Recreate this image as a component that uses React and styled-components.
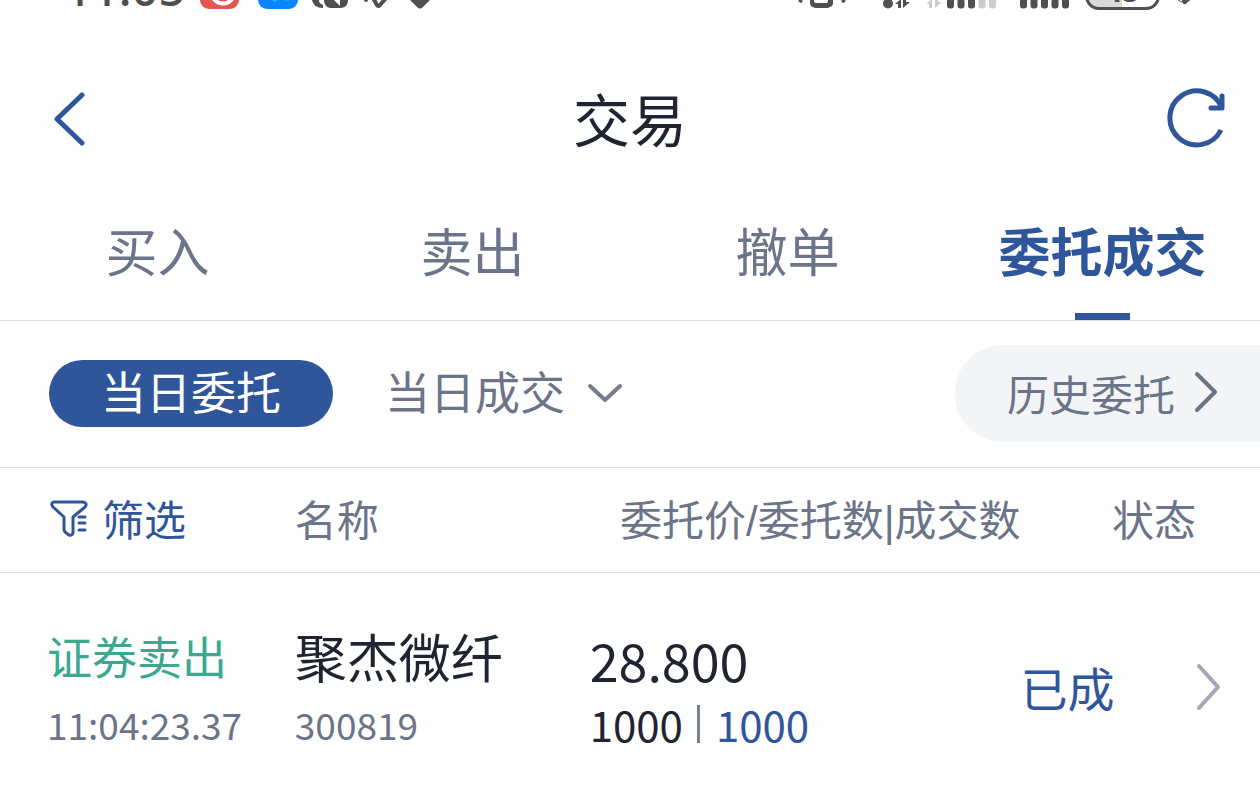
import styled, { createGlobalStyle } from "styled-components";

const tabs = ["买入", "卖出", "撤单", "委托成交"];

const orders = [
  {
    side: "证券卖出",
    time: "11:04:23.37",
    name: "聚杰微纤",
    code: "300819",
    price: "28.800",
    amount: "1000",
    dealt: "1000",
    status: "已成",
  },
];

function SignalBars({ total, active, x = 0 }) {
  return Array.from({ length: total }, (_, i) => (
    <rect
      key={i}
      x={x + i * 10.5}
      y="-20"
      width="7"
      height="28.5"
      rx="3"
      fill={i < active ? "#4f4f4f" : "#cccccc"}
    />
  ));
}

function PhoneStatus() {
  return (
    <StatusBar>
      <StatusGroup>
        <Clock>11:05</Clock>
        <svg width="42" height="12">
          <rect x="0" y="-30" width="39" height="39" rx="9" fill="#e2574f" />
          <circle cx="23" cy="-8" r="11.5" fill="none" stroke="#fff" strokeWidth="4" />
          <circle cx="23" cy="-5" r="5" fill="#fff" />
        </svg>
        <svg width="42" height="12">
          <rect x="2" y="-30" width="40" height="39" rx="9" fill="#0b84ff" />
          <path d="M15 0l4 2 3-2h6l5 1v-4H15z" fill="#19b5f5" />
        </svg>
        <svg width="37" height="12">
          <path d="M0 0c1 5 5 8 11 8V5C8 4 7 2 7 0z" fill="#4f4f4f" />
          <path d="M12 0h24c0 5-3 8-8 8H18c-4-1-6-4-6-8z" fill="#4f4f4f" />
          <path d="M20 -2h8v8z" fill="#fff" />
        </svg>
        <svg width="28" height="12">
          <circle cx="3" cy="0" r="2" fill="#4f4f4f" />
          <path d="M10 -2l4 7q1 2 3 0l6-7" fill="none" stroke="#4f4f4f" strokeWidth="4" />
        </svg>
        <svg width="28" height="12">
          <path d="M4 -1h22l-8 8q-3 3-6 0z" fill="#4f4f4f" />
        </svg>
      </StatusGroup>
      <StatusGroup>
        <svg width="70" height="12">
          <path d="M1 0l3 2M47 0l-3 2" stroke="#4f4f4f" strokeWidth="3" />
          <path d="M12 -2h4v3q0 2 2 2h10q2 0 2-2v-3h5v5q0 3-3 4l-2 1H17l-2-1q-3-1-3-4z" fill="#4f4f4f" />
        </svg>
        <svg width="30" height="12">
          <circle cx="6" cy="3.5" r="5" fill="#4f4f4f" />
          <path d="M13 4l6-5v9h-3V4zM21 -1v9l7-6h-4v-3z" fill="#4f4f4f" />
        </svg>
        <svg width="78" height="12">
          <path d="M0 4l6-5v9H3V4zM9 -1v9l7-6h-4v-3z" fill="#cccccc" />
          <SignalBars total={5} active={3} x={21} />
        </svg>
        <svg width="53" height="12">
          <SignalBars total={5} active={5} x={2} />
        </svg>
        <Battery>45</Battery>
        <svg width="21" height="12">
          <path d="M4 0l4 2M8 -2h10l-7 6-2-1z" fill="#4f4f4f" stroke="#4f4f4f" />
        </svg>
      </StatusGroup>
    </StatusBar>
  );
}

function Chevron({ width, height, points, color, stroke = 4 }) {
  return (
    <svg width={width} height={height} aria-hidden="true">
      <polyline
        points={points}
        fill="none"
        stroke={color}
        strokeWidth={stroke}
        strokeLinecap="round"
        strokeLinejoin="round"
      />
    </svg>
  );
}

function FilterIcon() {
  return (
    <svg width="38" height="38" fill="none" stroke="#2f559b" strokeWidth="3" strokeLinecap="round" strokeLinejoin="round" aria-hidden="true">
      <path d="M4 3H33Q38 4 35 8L23 18V34Q22 37 19 36L15 33Q14 32 14 30V18L3 8Q0 4 4 3Z" />
      <path d="M29 18H35M29 24H35M29 31H35" />
    </svg>
  );
}

export default function App() {
  return (
    <Page>
      <GlobalStyle />
      <PhoneStatus />
      <TitleBar>
        <BackButton aria-label="返回">
          <Chevron width={32} height={56} points="28,4 3,28 28,52" color="#2f559b" stroke={5} />
        </BackButton>
        <h1>交易</h1>
        <RefreshButton aria-label="刷新">
          <svg width="62" height="62" fill="none" stroke="#2f559b" strokeWidth="5" strokeLinejoin="round">
            <path d="M57 42A27 27 0 1 1 58 20" />
            <path d="M58 8V20H47" strokeLinecap="round" />
          </svg>
        </RefreshButton>
      </TitleBar>
      <Tabs>
        {tabs.map((tab) => (
          <Tab key={tab} $active={tab === "委托成交"}>
            {tab}
          </Tab>
        ))}
      </Tabs>
      <Filters>
        <Pill>当日委托</Pill>
        <DealButton>
          当日成交
          <Chevron width={36} height={26} points="3,8 18,22 33,8" color="#777b8c" />
        </DealButton>
        <HistoryButton>
          历史委托
          <Chevron width={26} height={44} points="4,4 22,22 4,40" color="#6b7488" />
        </HistoryButton>
      </Filters>
      <OrderTable>
        <colgroup>
          <NameCol />
          <NameCol />
          <PriceCol />
          <col />
        </colgroup>
        <thead>
          <tr>
            <HeadCell>
              <FilterButton>
                <FilterIcon />
                筛选
              </FilterButton>
            </HeadCell>
            <HeadCell>名称</HeadCell>
            <HeadCell $right>委托价/委托数|成交数</HeadCell>
            <HeadCell $right>状态</HeadCell>
          </tr>
        </thead>
        <tbody>
          {orders.map((order) => (
            <tr key={order.time}>
              <Cell>
                <Side>{order.side}</Side>
                <Minor>{order.time}</Minor>
              </Cell>
              <Cell>
                <Major>{order.name}</Major>
                <Minor>{order.code}</Minor>
              </Cell>
              <Cell>
                <Price>{order.price}</Price>
                <Amounts>
                  {order.amount}
                  <Divider />
                  <Dealt>{order.dealt}</Dealt>
                </Amounts>
              </Cell>
              <Cell>
                <Status>
                  {order.status}
                  <IconButton aria-label="详情">
                    <Chevron width={26} height={50} points="3,4 22,25 3,46" color="#a3a7b5" />
                  </IconButton>
                </Status>
              </Cell>
            </tr>
          ))}
        </tbody>
      </OrderTable>
    </Page>
  );
}

const GlobalStyle = createGlobalStyle`
  * {
    box-sizing: border-box;
  }

  body {
    margin: 0;
    background: #fefefe;
  }

  button {
    border: 0;
    padding: 0;
    background: none;
    font: inherit;
    color: inherit;
    cursor: pointer;
  }

  svg {
    display: block;
    flex-shrink: 0;
  }
`;

const Page = styled.div`
  font-family: "Noto Sans CJK SC", sans-serif;
  color: #1f2430;
`;

const StatusBar = styled.div`
  display: flex;
  justify-content: space-between;
  height: 12px;
  padding: 0 65px;
  overflow: hidden;
`;

const StatusGroup = styled.div`
  display: flex;
  align-items: flex-end;
  gap: 14px;
`;

const Clock = styled.div`
  width: 121px;
  font-family: "Noto Sans", sans-serif;
  font-size: 47px;
  line-height: 48px;
  font-weight: 500;
  color: #4f4f4f;
`;

const Battery = styled.div`
  width: 75px;
  height: 38px;
  margin-bottom: 2px;
  border: 3px solid #4f4f4f;
  border-radius: 14px;
  background: linear-gradient(to right, #d8d8d8 50%, #fff 50%);
  font-family: "Noto Sans", sans-serif;
  font-size: 30px;
  font-weight: 700;
  line-height: 32px;
  text-align: center;
  color: #4f4f4f;
`;

const TitleBar = styled.header`
  display: grid;
  grid-template-columns: 1fr auto 1fr;
  align-items: center;
  height: 174px;
  padding: 40px 34px 0;

  h1 {
    margin: 0;
    padding-bottom: 4px;
    font-size: 57px;
    font-weight: 400;
  }
`;

const IconButton = styled.button`
  display: flex;
`;

const BackButton = styled(IconButton)`
  padding-left: 20px;
`;

const RefreshButton = styled(IconButton)`
  justify-self: end;
`;

const Tabs = styled.nav`
  display: grid;
  grid-template-columns: repeat(4, 1fr);
  height: 135px;
  border-bottom: 1px solid #dcdfe2;
`;

const Tab = styled.button`
  position: relative;
  padding-bottom: 8px;
  font-size: 52px;
  font-weight: ${(props) => (props.$active ? 700 : 400)};
  color: ${(props) => (props.$active ? "#2f559b" : "#6b7488")};

  &::after {
    content: "";
    display: ${(props) => (props.$active ? "block" : "none")};
    position: absolute;
    bottom: 0;
    left: calc(50% - 28px);
    width: 55px;
    height: 7px;
    background: #2f559b;
  }
`;

const Filters = styled.div`
  display: flex;
  align-items: center;
  height: 147px;
  padding: 0 0 2px 49px;
  border-bottom: 1px solid #dcdfe2;
  font-size: 45px;
  color: #6b7488;
`;

const Pill = styled.button`
  width: 284px;
  height: 67px;
  border-radius: 34px;
  background: #2f559b;
  color: #fff;
  line-height: 60px;
  padding-bottom: 4px;
`;

const DealButton = styled.button`
  display: flex;
  align-items: center;
  gap: 22px;
  margin-left: 52px;
  line-height: 60px;
  padding-bottom: 4px;
`;

const HistoryButton = styled.button`
  display: flex;
  align-items: center;
  gap: 18px;
  height: 97px;
  margin-left: auto;
  padding: 0 41px 2px 52px;
  border-radius: 48px 0 0 48px;
  background: #f3f4f6;
  font-size: 42px;
`;

const OrderTable = styled.table`
  width: 100%;
  table-layout: fixed;
  border-collapse: collapse;
`;

const NameCol = styled.col`
  width: 23.4%;
`;

const PriceCol = styled.col`
  width: 34.2%;
`;

const HeadCell = styled.th`
  height: 104px;
  padding: 0 0 4px;
  border-bottom: 1px solid #dcdfe2;
  font-family: "Liberation Sans", "Noto Sans CJK SC", sans-serif;
  font-size: 42px;
  font-weight: 400;
  text-align: ${(props) => (props.$right ? "right" : "left")};
  white-space: nowrap;
  color: #6b7488;

  &:first-child {
    padding-left: 50px;
  }

  &:last-child {
    padding-right: 64px;
  }
`;

const FilterButton = styled.button`
  display: flex;
  align-items: center;
  gap: 14px;
  color: #2f559b;
`;

const Cell = styled.td`
  padding: 50px 0 36px;
  white-space: nowrap;

  &:first-child {
    padding-left: 47px;
  }
`;

const Major = styled.div`
  font-size: 52px;
  line-height: 66px;
`;

const Price = styled(Major)`
  line-height: 74px;
`;

const Side = styled.div`
  font-size: 45px;
  line-height: 66px;
  color: #3aa98f;
`;

const Minor = styled.div`
  font-size: 37px;
  line-height: 70px;
  color: #6b7488;
`;

const Amounts = styled.div`
  display: flex;
  align-items: center;
  padding-bottom: 8px;
  font-size: 42px;
  line-height: 54px;
`;

const Divider = styled.span`
  width: 3px;
  height: 38px;
  margin: 0 16px 0 14px;
  background: #7b8290;
`;

const Dealt = styled.span`
  color: #2f559b;
`;

const Status = styled.div`
  display: flex;
  align-items: center;
  justify-content: space-between;
  padding: 0 38px 8px 0;
  font-size: 47px;
  color: #2f559b;
`;
